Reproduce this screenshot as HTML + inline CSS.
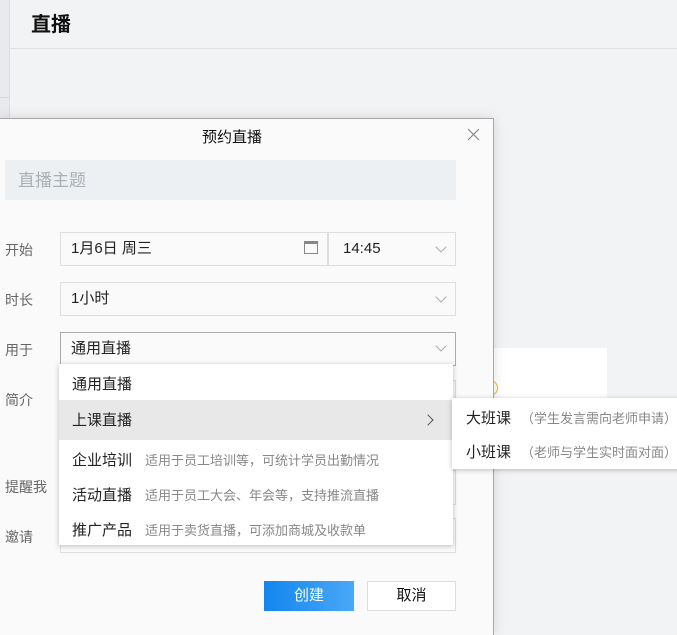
<!DOCTYPE html>
<html><head><meta charset="utf-8"><style>
*{margin:0;padding:0;box-sizing:border-box}
body{width:677px;height:635px;overflow:hidden;background:#f2f3f5;font-family:"Liberation Sans","Noto Sans CJK SC",sans-serif;position:relative;color:#222}
.a{position:absolute}
.lbl{position:absolute;left:5px;font-size:14px;color:#666}
.box{position:absolute;background:#fafafa;border:1px solid #dedede}
.chev{position:absolute;width:8px;height:8px;border-right:1px solid #aaa;border-bottom:1px solid #aaa;transform:rotate(45deg)}
.it{position:absolute;left:0;width:394px;height:35px;line-height:39px;padding-left:13px;font-size:15px;color:#222}
.it span{font-size:13px;color:#888;margin-left:13px}
</style></head><body>
<div class="a" style="left:0;top:0;width:10px;height:635px;background:#e9eaed;border-right:1px solid #dcdde0"></div>
<div class="a" style="left:0;top:97px;width:10px;height:1px;background:#d6d7da"></div>
<div class="a" style="left:31px;top:8px;font-size:20px;font-weight:bold;color:#111">直播</div>
<div class="a" style="left:10px;top:48px;width:667px;height:1px;background:#dfe0e3"></div>
<div class="a" style="left:493px;top:348px;width:114px;height:60px;background:#fff"></div>
<div class="a" style="left:482px;top:380px;width:16px;height:16px;border:1.5px solid #f0b030;border-radius:50%"></div>

<div class="a" style="left:0;top:118px;width:494px;height:517px;background:#fafafa;border-top:1px solid #a8a8a8;border-right:1px solid #a8a8a8;box-shadow:0 0 12px rgba(0,0,0,.12)">
</div>
<div class="a" style="left:0;top:126px;width:464px;text-align:center;font-size:15px;color:#111">预约直播</div>
<svg class="a" style="left:467px;top:128px" width="13" height="13"><path d="M1 1L12 12M12 1L1 12" stroke="#888" stroke-width="1.2"/></svg>
<div class="a" style="left:5px;top:160px;width:451px;height:40px;background:#edf0f3;font-size:17px;color:#aab0b6;line-height:42px;padding-left:13px">直播主题</div>

<div class="lbl" style="top:240px">开始</div>
<div class="box" style="left:60px;top:232px;width:268px;height:34px;font-size:15px;line-height:32px;padding-left:10px">1月6日 周三</div>
<div class="a" style="left:304px;top:241px;width:14px;height:13px;border:1px solid #888;border-top-width:3px"></div>
<div class="box" style="left:328px;top:232px;width:128px;height:34px;font-size:15px;line-height:32px;padding-left:14px">14:45</div>
<div class="chev" style="left:437px;top:243px"></div>

<div class="lbl" style="top:290px">时长</div>
<div class="box" style="left:60px;top:282px;width:396px;height:34px;font-size:15px;line-height:32px;padding-left:10px">1小时</div>
<div class="chev" style="left:437px;top:293px"></div>

<div class="lbl" style="top:340px">用于</div>
<div class="box" style="left:60px;top:332px;width:396px;height:34px;font-size:15px;line-height:32px;padding-left:10px;border-color:#aaa">通用直播</div>
<div class="chev" style="left:437px;top:342px"></div>

<div class="lbl" style="top:390px">简介</div>
<div class="box" style="left:60px;top:380px;width:396px;height:70px"></div>
<div class="lbl" style="top:477px">提醒我</div>
<div class="box" style="left:60px;top:470px;width:396px;height:35px"></div>
<div class="lbl" style="top:527px">邀请</div>
<div class="box" style="left:60px;top:518px;width:396px;height:35px"></div>

<div class="a" style="left:59px;top:364px;width:394px;height:181px;background:#fff;box-shadow:0 1px 5px rgba(0,0,0,.25)">
<div class="it" style="top:1px">通用直播</div>
<div class="it" style="top:36px;height:40px;line-height:42px;background:#e8e8e8">上课直播</div>
<div class="chev" style="left:365px;top:52px;transform:rotate(-45deg);border-color:#555"></div>
<div class="it" style="top:77px">企业培训<span>适用于员工培训等，可统计学员出勤情况</span></div>
<div class="it" style="top:112px">活动直播<span>适用于员工大会、年会等，支持推流直播</span></div>
<div class="it" style="top:147px">推广产品<span>适用于卖货直播，可添加商城及收款单</span></div>
</div>

<div class="a" style="left:452px;top:398px;width:230px;height:71px;background:#fff;box-shadow:0 1px 5px rgba(0,0,0,.25)">
<div class="a" style="left:14px;top:10px;font-size:15px;line-height:22px">大班课<span style="font-size:13px;color:#888;margin-left:10px">（学生发言需向老师申请）</span></div>
<div class="a" style="left:14px;top:44px;font-size:15px;line-height:22px">小班课<span style="font-size:13px;color:#888;margin-left:10px">（老师与学生实时面对面）</span></div>
</div>

<div class="a" style="left:264px;top:581px;width:90px;height:30px;background:linear-gradient(90deg,#1286ee,#4aa8f6);color:#fff;font-size:15px;line-height:30px;text-align:center">创建</div>
<div class="a" style="left:367px;top:581px;width:89px;height:30px;background:#fff;border:1px solid #ddd;font-size:15px;line-height:28px;text-align:center;color:#111">取消</div>
</body></html>
